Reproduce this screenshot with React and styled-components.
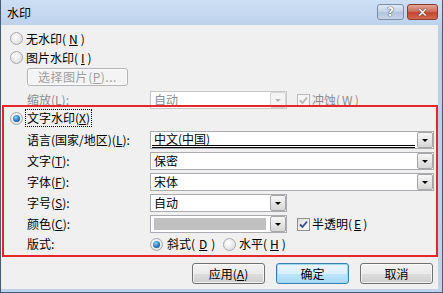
import React from 'react';
import styled, { createGlobalStyle } from 'styled-components';

const GlobalStyle = createGlobalStyle`
    body {
        margin: 0;
        font-family: "Noto Sans CJK SC", "Liberation Sans", sans-serif;
        font-size: 12px;
        color: #000;
    }
`;

/* FINESTRA */
const Window = styled.div`
    width: 443px;
    height: 293px;
    box-sizing: border-box;
    display: flex;
    flex-direction: column;
    background: linear-gradient(#cddff4, #b9d0ea 30px, #bfd3ec);
    border-left: 1px solid #4a5a70;
    border-right: 1px solid #4a5a70;
    border-bottom: 1px solid #4a5a70;
`;

const TitleBar = styled.div`
    height: 25px;
    flex-shrink: 0;
    display: flex;
    align-items: center;
    padding: 0 4px 0 6px;
    font-size: 12px;
    line-height: 1;

    span { flex: 1; }
`;

const CaptionButton = styled.div`
    width: ${p => p.$w}px;
    height: 16px;
    margin-left: ${p => p.$gap || 0}px;
    margin-top: -1px;
    border: 1px solid ${p => p.$close ? '#8a3b32' : '#7d8ea6'};
    border-radius: 3px;
    box-sizing: border-box;
    display: flex;
    align-items: center;
    justify-content: center;
    font-family: "DejaVu Sans", sans-serif;
    font-weight: bold;
    font-size: ${p => p.$close ? 13 : 12}px;
    color: #fff;
    text-shadow: 0 0 1px #333, 0 0 1px #333;
    background: ${p => p.$close
        ? 'linear-gradient(#e4a393, #d0705f 45%, #c24530 55%, #d46a4f)'
        : 'linear-gradient(#dde8f5, #c5d5e8 45%, #b2c5dc 55%, #c6d6ea)'};
`;

const Body = styled.div`
    flex: 1;
    background: #f0f0f0;
    margin-right: 4px;
    margin-bottom: 3px;
    display: flex;
    flex-direction: column;
    padding-top: 4px;
`;

const Row = styled.div`
    display: flex;
    align-items: ${p => p.$top ? 'flex-start' : 'center'};
    height: ${p => p.$h || 18}px;
    margin-top: ${p => p.$mt || 0}px;
    padding-left: ${p => p.$pl || 0}px;
    white-space: nowrap;
`;

const Label = styled.span`
    width: ${p => p.$w || 123}px;
    flex-shrink: 0;
    line-height: 18px;
    color: ${p => p.$disabled ? '#8d8d8d' : '#000'};
`;

const Option = styled.label`
    display: flex;
    align-items: center;
    gap: ${p => p.$gap || 3}px;
    width: ${p => p.$w ? p.$w + 'px' : 'auto'};
    color: ${p => p.$disabled ? '#8d8d8d' : '#000'};
    line-height: 16px;

    .focus {
        outline: 1px dotted #000;
        outline-offset: 0;
        padding: 0 1px;
    }
`;

const Radio = styled.span`
    width: 13px;
    height: 13px;
    flex-shrink: 0;
    box-sizing: border-box;
    border-radius: 50%;
    border: 1px solid #a5a9ae;
    background: radial-gradient(circle at 40% 35%, #ffffff, #dedede 80%);
    display: flex;
    align-items: center;
    justify-content: center;

    &::after {
        content: '';
        display: ${p => p.$checked ? 'block' : 'none'};
        width: 7px;
        height: 7px;
        border-radius: 50%;
        background: radial-gradient(circle at 40% 35%, #8fd0f4, #1f6fb5 60%, #0d3f79);
    }
`;

const Check = styled.span`
    width: 13px;
    height: 13px;
    flex-shrink: 0;
    box-sizing: border-box;
    border: 1px solid ${p => p.$disabled ? '#b9b9b9' : '#8e8f8f'};
    background: ${p => p.$disabled ? '#f4f4f4' : 'linear-gradient(135deg, #dfdfdf, #ffffff)'};
    display: flex;
    align-items: center;
    justify-content: center;
`;

const TickMark = ({ disabled }) => (
    <svg width="9" height="9" viewBox="0 0 9 9">
        <path d="M1 4.5 L3.5 7 L8 1.5" fill="none" stroke={disabled ? '#b3b3b3' : '#2e4f91'} strokeWidth="1.8" />
    </svg>
);

const SelectBox = styled.div`
    position: relative;
    height: 18px;
    width: ${p => p.$w ? p.$w + 'px' : 'auto'};
    flex: ${p => p.$w ? '0 0 auto' : '1'};
    margin-right: ${p => p.$w ? 0 : 2}px;
    box-sizing: border-box;
    border: 1px solid ${p => p.$disabled ? '#c8c8c8' : '#a9abb0'};
    background: #fff;
    display: flex;
    align-items: stretch;
    color: ${p => p.$disabled ? '#8d8d8d' : '#000'};
`;

const SelectValue = styled.div`
    position: relative;
    flex: 1;
    padding: 0 3px;
    line-height: ${p => p.$underline ? 13 : 15}px;

    /* doppia riga sotto la lingua selezionata */
    &::after {
        content: '';
        display: ${p => p.$underline ? 'block' : 'none'};
        position: absolute;
        left: 1px;
        right: 1px;
        bottom: 0;
        height: 1px;
        border-top: 1px solid #000;
        border-bottom: 1px solid #000;
    }
`;

const Swatch = styled.div`
    flex: 1;
    margin: 2px 3px 2px 3px;
    background: #c0c0c0;
`;

const ArrowButton = styled.div`
    width: 16px;
    flex-shrink: 0;
    margin: 0 0 0 1px;
    box-sizing: border-box;
    border: 1px solid ${p => p.$disabled ? '#d5d5d5' : '#a6a6a6'};
    border-radius: 2px;
    background: ${p => p.$disabled ? '#f4f4f4' : 'linear-gradient(#f7f7f7, #e6e6e6 50%, #d6d6d6)'};
    display: flex;
    align-items: center;
    justify-content: center;

    &::after {
        content: '';
        border-left: 3px solid transparent;
        border-right: 3px solid transparent;
        border-top: 3px solid ${p => p.$disabled ? '#b5b5b5' : '#000'};
        margin-top: 1px;
    }
`;

const Select = ({ w, disabled, underline, swatch, children }) => (
    <SelectBox $w={w} $disabled={disabled}>
        {swatch ? <Swatch /> : <SelectValue $underline={underline}>{children}</SelectValue>}
        <ArrowButton $disabled={disabled} />
    </SelectBox>
);

const Button = styled.div`
    width: ${p => p.$w || 73}px;
    height: ${p => p.$h || 21}px;
    box-sizing: border-box;
    border: 1px solid ${p => p.$disabled ? '#b2b5b8' : p.$default ? '#3c7fb1' : '#707070'};
    border-radius: 3px;
    background: ${p => p.$disabled
        ? '#f4f4f4'
        : p.$default
            ? 'linear-gradient(#eaf6fd, #d9f0fc 50%, #bee6fd 50%, #a7d9f5)'
            : 'linear-gradient(#f2f2f2, #ebebeb 50%, #dddddd 50%, #cfcfcf)'};
    box-shadow: ${p => p.$default ? 'inset 0 0 0 1px #9fd9f6' : 'inset 0 0 0 1px rgba(255,255,255,0.7)'};
    color: ${p => p.$disabled ? '#a0a0a0' : '#000'};
    display: flex;
    align-items: center;
    justify-content: center;
    line-height: 1;
    letter-spacing: ${p => p.$disabled ? '0.5px' : '0'};
`;

const RedBox = styled.div`
    position: relative;
    margin: 0 0 0 1px;
    width: 436px;
    box-sizing: border-box;
    border: 2px solid #e5262b;
    padding: 2px 0 2px 0;
`;

const ButtonBar = styled.div`
    display: flex;
    justify-content: flex-end;
    gap: 11px;
    margin-top: 6px;
    padding-right: 5px;
`;

const K = ({ k }) => <>(<u>{k}</u>)</>;

const App = () => {
    return (
        <>
            <GlobalStyle />
            <Window>
                <TitleBar>
                    <span>水印</span>
                    <CaptionButton $w={27}>?</CaptionButton>
                    <CaptionButton $w={31} $gap={3} $close>✕</CaptionButton>
                </TitleBar>

                <Body>
                    <Row $h={19} $pl={9}>
                        <Option><Radio />无水印<K k="N" /></Option>
                    </Row>
                    <Row $h={19} $pl={9}>
                        <Option><Radio />图片水印<K k="I" /></Option>
                    </Row>
                    <Row $mt={1} $pl={26}>
                        <Button $w={101} $h={18} $disabled>选择图片<K k="P" />...</Button>
                    </Row>
                    <Row $h={15} $mt={4} $pl={26} $top>
                        <Label $w={123} $disabled style={{ marginTop: 1 }}>缩放<K k="L" />:</Label>
                        <div style={{ marginTop: 1, display: 'flex' }}>
                            <Select w={137} disabled>自动</Select>
                        </div>
                        <Option $disabled style={{ marginLeft: 10, marginTop: 2 }} $gap={2}>
                            <Check $disabled><TickMark disabled /></Check>冲蚀<K k="W" />
                        </Option>
                    </Row>

                    {/* riquadro rosso: filigrana di testo */}
                    <RedBox>
                        <Row $pl={6}>
                            <Option><Radio $checked /><span className="focus">文字水印<K k="X" /></span></Option>
                        </Row>
                        <Row $mt={4} $pl={23}>
                            <Label>语言(国家/地区)<K k="L" />:</Label>
                            <Select underline>中文(中国)</Select>
                        </Row>
                        <Row $mt={3} $pl={23}>
                            <Label>文字<K k="T" />:</Label>
                            <Select>保密</Select>
                        </Row>
                        <Row $mt={3} $pl={23}>
                            <Label>字体<K k="F" />:</Label>
                            <Select>宋体</Select>
                        </Row>
                        <Row $mt={3} $pl={23}>
                            <Label>字号<K k="S" />:</Label>
                            <Select w={137}>自动</Select>
                        </Row>
                        <Row $mt={3} $pl={23}>
                            <Label>颜色<K k="C" />:</Label>
                            <Select w={137} swatch />
                            <Option style={{ marginLeft: 10 }} $gap={2}>
                                <Check><TickMark /></Check>半透明<K k="E" />
                            </Option>
                        </Row>
                        <Row $mt={2} $pl={23}>
                            <Label>版式:</Label>
                            <Option $w={73} $gap={4}><Radio $checked />斜式<K k="D" /></Option>
                            <Option $gap={3}><Radio />水平<K k="H" /></Option>
                        </Row>
                    </RedBox>

                    <ButtonBar>
                        <Button>应用<K k="A" /></Button>
                        <Button $default>确定</Button>
                        <Button>取消</Button>
                    </ButtonBar>
                </Body>
            </Window>
        </>
    );
};

export default App;
